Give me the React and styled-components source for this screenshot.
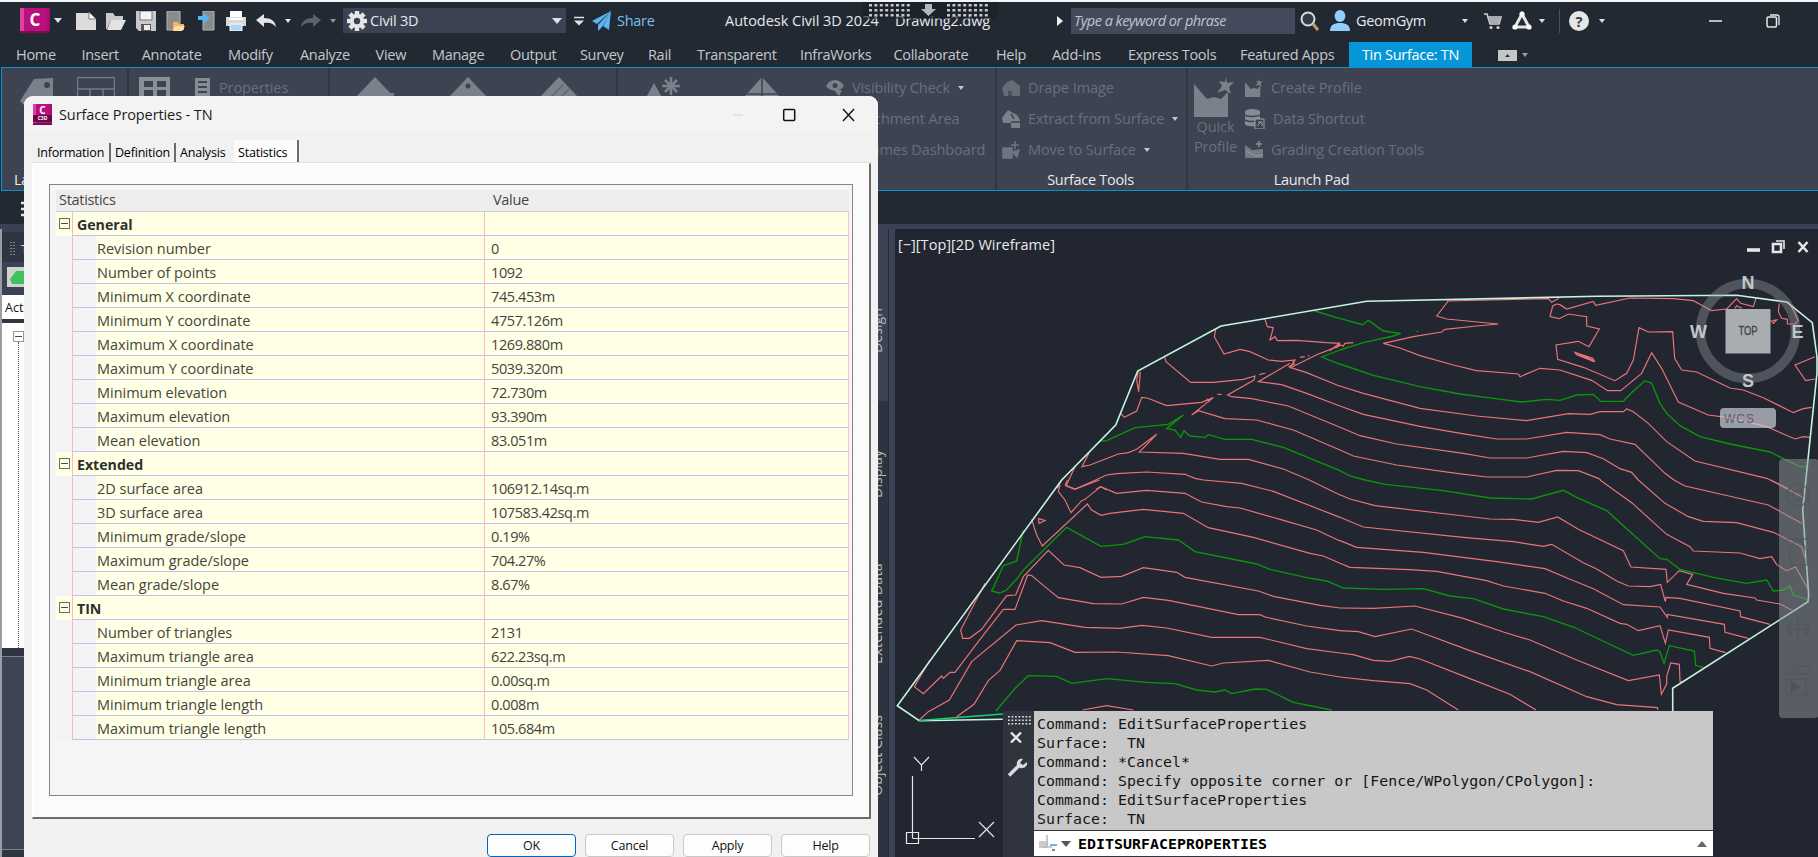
import React from 'react';
import styled, { createGlobalStyle, css } from 'styled-components';

const Global = createGlobalStyle`
  *, *::before, *::after { box-sizing: border-box; }
  html, body { margin: 0; padding: 0; background: #222933; }
  body { font-family: "Open Sans", "Noto Sans", sans-serif; overflow: hidden; }
`;

/* ---------- application shell ---------- */
const Shell = styled.div`
  position: relative;
  width: 1818px;
  height: 857px;
  overflow: hidden;
  display: flex;
  flex-direction: column;
  background: #222933;
  border-top: 2px solid #f4f6f8;
`;
const TitleBar = styled.header`
  height: 37px;
  flex: none;
  display: flex;
  align-items: center;
  color: #f0f2f4;
`;
const Cell = styled.div`
  width: ${p => p.$w}px;
  height: ${p => p.$h || 26}px;
  flex: none;
  display: flex;
  align-items: center;
  white-space: nowrap;
  ${p => p.$center && css`justify-content: center;`}
`;
const Label = styled.span`
  font-size: ${p => p.$size || 14.5}px;
  letter-spacing: ${p => p.$ls ?? -0.3}px;
  color: ${p => p.$color || '#e6e9ec'};
  font-style: ${p => (p.$italic ? 'italic' : 'normal')};
  white-space: nowrap;
  line-height: 18px;
`;
const Caret = styled.i`
  display: block;
  width: 0;
  height: 0;
  border: ${p => p.$s || 4}px solid transparent;
  border-top: ${p => (p.$s || 4) + 1}px solid ${p => p.$color || '#dfe2e5'};
  border-bottom: 0;
`;
const Workspace = styled.div`
  width: 223px;
  height: 25px;
  flex: none;
  display: flex;
  align-items: center;
  gap: 3px;
  padding: 0 4px;
  background: #3b4352;
  ${Caret} { margin-left: auto; }
`;
const SearchBox = styled.div`
  width: 224px;
  height: 26px;
  flex: none;
  display: flex;
  align-items: center;
  padding-left: 3px;
  background: #444a5b;
`;
const Divider = styled.div`
  width: 1px;
  height: 24px;
  background: #4a505c;
`;
const AppBadge = styled.div`
  width: ${p => p.$w}px;
  height: ${p => p.$h}px;
  flex: none;
  display: flex;
  flex-direction: column;
  align-items: center;
  justify-content: center;
  background: linear-gradient(90deg, #e0409e 0 14%, #b8107c 14% 85%, #a00c6c);
  border-bottom: 2px solid #7d0a52;
  color: #fff;
  font: bold ${p => p.$fs}px/1 "Open Sans", sans-serif;
  small {
    align-self: stretch;
    background: #6d0648;
    font-size: 5px;
    line-height: 7px;
    text-align: center;
  }
`;

/* ---------- ribbon ---------- */
const TabRow = styled.nav`
  height: 28px;
  flex: none;
  display: flex;
  align-items: stretch;
  padding-left: 16px;
`;
const RibbonTab = styled.div`
  width: ${p => p.$w}px;
  flex: none;
  display: flex;
  align-items: center;
  padding-top: 2px;
  font-size: 14.5px;
  letter-spacing: -0.3px;
  white-space: nowrap;
  color: #c4c8cc;
`;
const ActiveTab = styled(RibbonTab)`
  justify-content: center;
  margin-top: 3px;
  padding: 0 0 1px;
  background: #0696d7;
  color: #fff;
`;
const Ribbon = styled.section`
  height: 124px;
  flex: none;
  display: flex;
  background: #3d4351;
  border: 1px solid #0a93d4;
  border-right: 0;
  margin-left: 1px;
`;
const Panel = styled.div`
  width: ${p => p.$w}px;
  flex: ${p => (p.$w ? 'none' : 1)};
  display: flex;
  flex-direction: column;
  padding-top: 4px;
  border-right: ${p => (p.$w ? '2px solid #303642' : '0')};
`;
const PanelBody = styled.div`
  height: 99px;
  display: flex;
  padding-left: ${p => p.$pl || 0}px;
`;
const PanelName = styled.div`
  display: flex;
  width: ${p => p.$w || 'auto'};
  justify-content: ${p => (p.$left ? 'flex-start' : 'center')};
  padding: 0 2px 0 ${p => (p.$left ? 12 : 0)}px;
  font-size: 14.5px;
  letter-spacing: -0.3px;
  line-height: 18px;
  color: #e8eaec;
`;
const ToolStack = styled.div`
  display: flex;
  flex-direction: column;
  margin-left: ${p => p.$ml || 0}px;
`;
const Tool = styled.div`
  height: 31px;
  display: flex;
  align-items: center;
  gap: 8px;
  font-size: 14.5px;
  letter-spacing: -0.1px;
  white-space: nowrap;
  color: #69707c;
`;
const BigTool = styled.div`
  width: ${p => p.$w}px;
  flex: none;
  display: flex;
  flex-direction: column;
  padding-top: 5px;
  font-size: 14.5px;
  letter-spacing: -0.1px;
  line-height: 20px;
  text-align: center;
  color: #69707c;
`;

/* ---------- workspace under the ribbon ---------- */
const FileTabs = styled.div`
  height: 33px;
  flex: none;
  padding: 10px 0 0 21px;
`;
const Work = styled.main`
  flex: 1;
  display: flex;
  min-height: 0;
  border-top: 5px solid #3b4154;
`;
const Toolspace = styled.aside`
  width: 889px;
  flex: none;
  display: flex;
  justify-content: space-between;
  background: #2f3541;
`;
const SpaceLeft = styled.div`
  width: 40px;
  display: flex;
  flex-direction: column;
  border-left: 2px solid #9a9da3;
`;
const SpaceHead = styled.div`
  height: 33px;
  padding: 3px 0 0 8px;
  display: flex;
  align-items: center;
  gap: 6px;
  border-top: 3px solid #3b4154;
  color: #dde0e4;
  font-size: 13px;
`;
const SpaceTool = styled.div`
  height: 33px;
  padding: 5px 5px;
  background: #3b4252;
`;
const GreenButton = styled.div`
  width: 26px;
  height: 20px;
  padding: 3px;
  background: #d4d2cf;
`;
const ViewSelect = styled.div`
  height: 24px;
  padding: 3px 3px;
  background: #fff;
  color: #111;
  font-size: 12.5px;
  line-height: 20px;
`;
const Tree = styled.div`
  height: 325px;
  margin-top: 4px;
  padding: 8px 0 0 11px;
  background: #fff;
`;
const TreeLine = styled.div`
  height: 306px;
  margin-left: 5px;
  border-left: 1px dotted #555;
`;
const Expander = styled.div`
  width: 11px;
  height: 11px;
  display: flex;
  align-items: center;
  justify-content: center;
  border: 1px solid ${p => p.$color || '#70705e'};
  &::after { content: ''; width: 7px; height: 1px; background: #4a4a55; }
`;
const LowerPane = styled.div`
  flex: 1;
  margin: 8px 0 7px;
  background: #3d4453;
  border-top: 1px solid #7d828c;
  border-bottom: 1px solid #7d828c;
`;
const SideTabs = styled.div`
  width: 21px;
  display: flex;
  flex-direction: column;
`;
const SideTab = styled.div`
  height: ${p => p.$h}px;
  padding: ${p => p.$pt}px 0 0 0;
  background: ${p => (p.$on ? '#3b4252' : '#2e3340')};
  border-right: 1px solid #272c37;
  color: #b9bdc3;
  font-size: 14.2px;
  line-height: 17px;
  letter-spacing: ${p => p.$ls || 0}px;
  white-space: nowrap;
  span { display: block; writing-mode: vertical-rl; transform: rotate(180deg); }
`;
const Splitter = styled.div`
  width: 6px;
  flex: none;
  background: #3a4253;
`;
const Viewport = styled.div`
  position: relative;
  flex: 1;
  background: #212630;
`;
const Drawing = styled.svg`
  display: block;
`;

/* ---------- overlays on the drawing ---------- */
const CommandWindow = styled.div`
  position: absolute;
  left: 1003px;
  top: 709px;
  width: 710px;
  height: 146px;
  display: flex;
  background: #30343f;
`;
const CommandGrip = styled.div`
  width: 31px;
  flex: none;
`;
const CommandBody = styled.div`
  flex: 1;
  display: flex;
  flex-direction: column;
  font-family: "DejaVu Sans Mono", "Liberation Mono", monospace;
  font-size: 14.9px;
  letter-spacing: 0.04px;
  color: #151515;
`;
const History = styled.div`
  height: 119px;
  padding: 4px 3px;
  background: #c8c8c8;
  line-height: 19px;
  white-space: pre;
`;
const Prompt = styled.div`
  height: 25px;
  margin-top: 1px;
  padding: 0 6px 0 5px;
  display: flex;
  align-items: center;
  gap: 4px;
  background: #fff;
  font-weight: bold;
  color: #000;
  b { flex: 1; margin-left: 3px; }
`;
const UpCaret = styled(Caret)`
  transform: rotate(180deg);
`;
const NavBar = styled.div`
  position: absolute;
  left: 1779px;
  top: 457px;
  width: 40px;
  height: 259px;
  border-radius: 4px;
  background: rgba(140, 146, 146, 0.52);
`;
const GripOverlay = styled.div`
  position: absolute;
  left: 862px;
  top: -2px;
  width: 136px;
  height: 19px;
  background: rgba(27, 31, 39, 0.6);
`;

/* ---------- dialog ---------- */
const Dialog = styled.div`
  position: absolute;
  left: 24px;
  top: 94px;
  width: 854px;
  height: 770px;
  border-radius: 9px 9px 0 0;
  display: flex;
  flex-direction: column;
  background: #f1f1f1;
  color: #111;
`;
const DialogTitle = styled.div`
  height: 37px;
  padding: 0 23px 0 9px;
  display: flex;
  align-items: center;
  gap: 7px;
  background: #f3f3f3;
  border-radius: 9px 9px 0 0;
`;
const Spacer = styled.div`flex: 1;`;
const DialogTabs = styled.div`
  height: 32px;
  margin: 0 8px 0 4px;
  padding-top: 7px;
  display: flex;
`;
const DialogTab = styled.div`
  width: ${p => p.$w}px;
  height: ${p => (p.$on ? 26 : 22)}px;
  margin-top: ${p => (p.$on ? 0 : 3)}px;
  padding: 0 0 ${p => (p.$on ? 2 : 4)}px ${p => p.$pl}px;
  display: flex;
  align-items: center;
  font-size: 12.5px;
  letter-spacing: -0.2px;
  color: #000;
  background: ${p => (p.$on ? '#fbfbfb' : 'transparent')};
  border-right: ${p => (p.$line ? '2px solid #6c6c6c' : '0')};
`;
const TabPage = styled.div`
  height: 656px;
  margin: -2px 7px 0 8px;
  padding: 20px 16px 0 16px;
  background: #fbfbfb;
  border-top: 1px solid #fff;
  border-left: 1px solid #fff;
  border-right: 2px solid #6c6c6c;
  border-bottom: 2px solid #6c6c6c;
  box-shadow: 0 -1px 0 #dedede;
`;
const GridFrame = styled.div`
  height: 612px;
  padding: 5px 3px 0 6px;
  background: #f5f5f5;
  border: 1px solid #858585;
`;
const GridHead = styled.div`
  height: 22px;
  display: grid;
  grid-template-columns: 428px 1fr;
  background: #ededed;
  border-bottom: 1px solid #cfcfcf;
  font-size: 14.5px;
  letter-spacing: -0.3px;
  line-height: 19px;
  color: #454545;
  div { padding-left: 3px; }
  div + div { padding-left: 9px; }
`;
const Row = styled.div`
  height: 24px;
  display: grid;
  grid-template-rows: 24px;
  grid-template-columns: 16px 412px 1fr;
  font-size: ${p => p.$group ? 14.2 : 14.5}px;
  font-weight: ${p => (p.$group ? 700 : 400)};
  letter-spacing: -0.02px;
  line-height: 25px;
  color: ${p => (p.$group ? '#2f2f2b' : '#454540')};
`;
const Gutter = styled.div`
  padding: 6px 0 0 3px;
  background: ${p => (p.$group ? '#ffffe6' : '#f3f3f3')};
`;
const NameCell = styled.div`
  padding-left: ${p => (p.$group ? 4 : 24)}px;
  border-left: 1px solid #f8bcbc;
  border-bottom: 1px solid #c4c0ee;
  background: ${p => (p.$group ? '#ffffe6' : 'linear-gradient(90deg, #f3f3f3 23px, #ffffe6 23px)')};
`;
const ValueCell = styled.div`
  padding-left: 6px;
  letter-spacing: -0.4px;
  border-left: 1px solid #f8bcbc;
  border-right: 1px solid #f0c4d4;
  border-bottom: 1px solid #c4c0ee;
  background: #ffffe6;
`;
const Buttons = styled.div`
  padding: 15px 8px 0 0;
  display: flex;
  justify-content: flex-end;
  gap: 9px;
`;
const PushButton = styled.div`
  width: 89px;
  height: 23px;
  padding-bottom: 1px;
  display: flex;
  align-items: center;
  justify-content: center;
  border: ${p => (p.$primary ? '1.5px solid #0067c0' : '1px solid #c8c8c8')};
  border-radius: 4px;
  background: #fdfdfd;
  font-size: 12.5px;
  letter-spacing: -0.2px;
`;

/* ---------- icons ---------- */
const Glyph = styled.svg`
  display: block;
  flex: none;
`;
const Svg = ({ w = 20, h = 20, vb, children }) => (
  <Glyph width={w} height={h} viewBox={vb || `0 0 ${w} ${h}`} fill="none">{children}</Glyph>
);
const NewIcon = () => <Svg><path d="M0 2h13l7 6v11H0z" fill="#dcdcdc" /><path d="M13 1v7h7z" fill="#fff" stroke="#777" /></Svg>;
const OpenIcon = () => <Svg><path d="M0 2h7l2 3h8v4H5L1 18H0z" fill="#c9c9c9" /><path d="M5 9h15l-5 10H1z" fill="#e2e2e2" /></Svg>;
const SaveIcon = () => <Svg><path d="M0 0h20v20H3l-3-3z" fill="#c9c9c9" /><path d="M4 0h12v9H4z" fill="#f4f4f4" stroke="#777" /><path d="M5 13h10v7H5z" fill="#555" /><path d="M8 14h6v5H8z" fill="#eee" /></Svg>;
const MobileOpenIcon = () => <Svg><path d="M1 0h13v19H1z" fill="#8b8b8b" stroke="#b5b5b5" /><path d="M7 11h5l1 2h5v6H7z" fill="#f2b764" /><path d="M9 15h10l-3 5H7z" fill="#ffdca0" /></Svg>;
const MobileSaveIcon = () => <Svg><path d="M5 0h11v19H5z" fill="#8b8b8b" stroke="#b5b5b5" /><path d="M0 5h6V2l6 5-6 5V9H0z" fill="#4db8f5" /></Svg>;
const PrintIcon = () => <Svg><path d="M4 0h12v6H4z" fill="#fff" /><path d="M0 6h20v9H0z" fill="#d8d8d8" /><path d="M3 8h14" stroke="#fff" strokeWidth="2" /><path d="M4 13h12v7H4z" fill="#a9d6f7" stroke="#fff" /></Svg>;
const ArrowIcon = ({ color, flip }) => (
  <Svg h={14} vb="0 0 20 14"><path transform={flip ? 'matrix(-1 0 0 1 20 0)' : ''} d="M0 6l8-6v4c7 0 11 3 12 9-3-4-7-5-12-4v4z" fill={color} /></Svg>
);
const GearIcon = () => <Svg w={20} h={20} vb="-10 -10 20 20">{[0, 45, 90, 135].map(a => <path key={a} d="M0-10V10" stroke="#e6e6e6" strokeWidth="4.4" transform={`rotate(${a})`} />)}<circle r="5.2" stroke="#e6e6e6" strokeWidth="4" fill="#3b4352" /></Svg>;
const PlaneIcon = () => <Svg><path d="M19 0L0 10l5 3zM19 0L6 14v6l4-4zM19 0l-8 15 6 4z" fill="#5bb5f0" /></Svg>;
const SearchIcon = () => <Svg><circle cx="8" cy="8" r="6.5" stroke="#d9dcdf" strokeWidth="2" fill="#333a45" /><path d="M13 13l5 6" stroke="#c39a68" strokeWidth="3" /></Svg>;
const UserIcon = () => <Svg h={21}><ellipse cx="10" cy="6" rx="5.4" ry="6" fill="#8fd0fb" /><path d="M0 21c0-6 4-8 10-8s10 2 10 8z" fill="#8fd0fb" /></Svg>;
const CartIcon = () => <Svg w={18} h={18}><path d="M0 2h3l3 10h9l2-7H4" stroke="#d0d3d6" strokeWidth="1.6" /><path d="M4 5h13l-2 6H6z" fill="#a9adb1" /><circle cx="7" cy="15.5" r="1.6" fill="#d0d3d6" /><circle cx="14" cy="15.5" r="1.6" fill="#d0d3d6" /></Svg>;
const AppsIcon = () => <Svg><path d="M10 3L3 16h14z" stroke="#e4e6e8" strokeWidth="3" /><circle cx="10" cy="3" r="2.6" fill="#fff" /><circle cx="3" cy="16" r="2.6" fill="#fff" /><circle cx="17" cy="16" r="2.6" fill="#fff" /></Svg>;
const HelpIcon = styled.div`
  width: 20px;
  height: 20px;
  border-radius: 50%;
  background: #e6e6e6;
  color: #3a3f48;
  font: bold 15px/20px "Open Sans", sans-serif;
  text-align: center;
`;
const DIM = '#7b818b';
const Peak = ({ w = 38, extra }) => <Svg w={w} h={26}><path d={`M${w / 2} 0L${w} 20v6H0v-6z`} fill={DIM} />{extra}</Svg>;
const HouseIcon = () => <Svg w={18} h={16}><path d="M0 8l5-6 5-2 8 6v10H2z" fill="#666c77" /><path d="M6 16v-5h4v5z" fill="#4a515d" /></Svg>;
const ExtractIcon = () => <Svg w={18} h={18}><path d="M0 8l6-8 5 3 4 2 3 5v8H9v-5H1z" fill="#7b818b" /><path d="M9 4l3 5M9 12h9" stroke="#3d4451" strokeWidth="1.5" /></Svg>;
const MoveIcon = () => <Svg w={18} h={18}><path d="M1 7h9v10H1zM13 0v8M9 4h8M10 11l7-2-2 7z" fill="#6e747f" stroke="#6e747f" strokeWidth="1.5" /></Svg>;
const ProfileIcon = ({ w = 18, h = 18 }) => <Svg w={w} h={h} vb="0 0 40 40"><path d="M0 7l13 15 7-2 7 2 7-7v25H0z" fill={DIM} /><path d="M32 0l1 6 7-1-5 5 2 7-6-4-8 3 5-7-3-5 6 1z" fill={DIM} /></Svg>;
const DataIcon = () => <Svg w={20} h={20}><path d="M0 3c0-4 15-4 15 0v12c0 3-15 3-15 0z" fill="#868b94" /><path d="M0 6c3 2 12 2 15 0M0 11c3 2 12 2 15 0" stroke="#3d4451" strokeWidth="1.5" /><path d="M10 10h9v10h-9z" fill="#3d4451" stroke="#9a9fa6" /><path d="M12 17l4-4M13 13h4v4" stroke="#9a9fa6" /></Svg>;
const GradingIcon = () => <Svg w={18} h={18}><path d="M0 4l7 5 11-1v9H0z" fill="#747a85" /><path d="M14 0v6M11 3h6M1 10l10 5 7-1" stroke="#8a9099" strokeWidth="1.5" /></Svg>;

/* ---------- data ---------- */
const TABS = [['Home', 65.5], ['Insert', 60.2], ['Annotate', 86.3], ['Modify', 72], ['Analyze', 75.6], ['View', 56.4], ['Manage', 78], ['Output', 70], ['Survey', 68], ['Rail', 49], ['Transparent', 103], ['InfraWorks', 93.5], ['Collaborate', 102.5], ['Help', 56], ['Add-ins', 76], ['Express Tools', 112], ['Featured Apps', 109]];

const STATS = [
  ['General', [['Revision number', '0'], ['Number of points', '1092'], ['Minimum X coordinate', '745.453m'], ['Minimum Y coordinate', '4757.126m'], ['Maximum X coordinate', '1269.880m'], ['Maximum Y coordinate', '5039.320m'], ['Minimum elevation', '72.730m'], ['Maximum elevation', '93.390m'], ['Mean elevation', '83.051m']]],
  ['Extended', [['2D surface area', '106912.14sq.m'], ['3D surface area', '107583.42sq.m'], ['Minimum grade/slope', '0.19%'], ['Maximum grade/slope', '704.27%'], ['Mean grade/slope', '8.67%']]],
  ['TIN', [['Number of triangles', '2131'], ['Maximum triangle area', '622.23sq.m'], ['Minimum triangle area', '0.00sq.m'], ['Minimum triangle length', '0.008m'], ['Maximum triangle length', '105.684m']]],
];

const HISTORY = ['Command: EditSurfaceProperties', 'Surface:  TN', 'Command: *Cancel*', 'Command: Specify opposite corner or [Fence/WPolygon/CPolygon]:', 'Command: EditSurfaceProperties', 'Surface:  TN'];

/* Contour lines of the surface, in four survey sheets drawn at 1:3. */
const SHEETS = [
  {
    x: 860, y: 230,
    minor: [
      '1215,267 1222,290 1240,293 1230,330 1245,320 1252,332 1310,331 1400,338 1440,340',
      '1067,298 1063,320 1092,372 1140,358 1170,365 1225,390 1265,394 1305,390 1290,412 1340,428 1440,469',
      '1298,390 1303,402 1285,410',
      '914,382 918,395 992,457 1060,457 1150,448 1185,438 1182,450 1103,495 1115,500 1175,506 1285,528 1440,592',
      '835,425 830,450 836,485 841,425',
      '780,548 793,562 830,543 845,502 862,504 920,527 1025,517 1060,503 1045,515 995,555 1015,542 1095,566 1190,570 1300,600 1440,660',
      '1040,506 1048,516',
      '1440,347 1370,374 1290,414', '1290,400 1195,455 1265,464 1340,490 1440,528',
      '1198,434 1216,429', '1072,493 1085,493', '1320,382 1334,380', '1344,378 1348,377',
      '690,663 666,710 690,705 775,672 805,668 830,658 890,613 838,666 970,670 1080,688 1165,688 1270,717 1348,750',
      '645,710 618,768 645,778 740,735 770,731 860,726 975,733 1005,745 1030,750',
      '605,750 592,775', '708,778 722,770 740,780',
    ],
    major: [
      '720,633 740,632 825,593 925,583 970,555 920,596 945,600 962,622 972,602 990,618 1035,622 1045,614 1095,628 1175,628 1270,652 1440,722',
      '1365,243 1440,266', '1440,360 1385,381 1440,403',
    ],
  },
  {
    x: 1330, y: 230,
    minor: [
      '355,213 320,258 350,267 505,282 440,288 345,298 335,306 250,320 160,340 210,354 270,377 370,405 440,422 565,432 570,440 630,415 690,420 785,451 833,482 872,482 935,430 965,368 995,415 1045,516 1135,555 1190,562 1310,590 1395,627 1420,620 1440,622',
      '350,213 655,206 665,217 687,205',
      '680,222 690,224 710,237 790,214 797,226 900,204 1030,206 1090,212 1145,242 1190,237 1220,206 1232,220 1270,230 1278,205',
      '680,222 668,228 660,260 688,266 715,252 770,260 770,288 808,297 777,350 745,334 678,345 683,388 760,412 855,452 890,430 910,390 927,293 955,306 1028,305 1034,385 1055,420 1100,426 1200,474 1240,480 1300,503 1390,548 1420,536 1445,532',
      '735,367 793,393 788,385 735,367 740,374 793,395',
      '30,468 100,490 270,535 440,558 590,572 715,551 780,553 810,545 880,545 890,537 910,545 955,580 1010,635 1095,693 1310,745 1375,776',
      '30,528 100,553 270,589 410,613 500,627 590,627 710,607 810,614 840,627 915,643 1005,730 1032,750',
      '30,592 90,617 200,642 400,670 480,684 590,684 700,664 770,668 820,686 870,716 905,727 925,750',
      '30,660 70,678 200,705 380,730 470,741 590,741 680,721 745,722 805,745 812,750',
      '30,338 0,362', '20,355 25,343 40,348 45,340 70,338',
      '1348,220 1345,245 1355,265 1372,268 1372,282 1395,282 1405,272 1390,240 1375,215',
      '1455,380 1395,405 1427,452 1455,447',
      '1322,270 1330,280 1340,270 1328,272',
      '1215,235 1220,227 1235,235',
    ],
    major: [
      '30,266 40,268 98,284 115,271 160,303 212,310 190,318 100,338 30,360',
      '260,303 266,306',
      '30,402 130,436 270,470 390,492 490,505 575,516 650,508 690,511 740,495 790,493 812,514 880,514 910,483 945,452 965,460 990,520 1010,550 1050,587 1110,620 1200,642 1320,666 1410,710 1430,710',
      '30,722 60,738 105,750',
    ],
  },
  {
    x: 860, y: 480,
    minor: [
      '622,0 616,15 645,27 718,0',
      '600,15 595,35 615,60 633,98 665,62 675,58 722,20 770,40 860,31 975,40 1025,66 1100,80 1140,84 1260,118 1370,150 1440,183',
      '515,118 530,165 547,198 682,72 695,90 723,106 750,100 850,88 970,100 1045,143 1180,172 1350,220 1390,228 1440,250',
      '535,115 555,122 537,130 535,115',
      '375,310 302,450 308,475 328,475 365,448 440,347 467,345 490,290 565,211 612,255 660,263 723,292 785,289 850,263 950,277 975,292 1195,333 1240,349 1380,376 1440,384',
      '210,540 163,620 190,641 245,588 250,595 270,577 285,577 360,478 430,388 465,388 503,285 515,287 540,308 595,353 700,371 785,372 850,352 925,361 1135,404 1200,404 1215,411 1340,438 1440,452',
      '178,720 205,695 268,660 335,545 468,435 545,422 675,442 780,445 845,436 920,444 1055,472 1200,472 1340,506 1440,519',
      '290,710 342,673 385,602 420,571 470,482 570,488 645,517 770,516 925,527 1055,558 1090,549 1225,541 1350,576 1440,591',
      '668,690 740,677 820,690', '1030,0 1145,10 1240,34 1440,112', '1348,0 1440,45',
    ],
    major: [
      '490,150 470,243 430,257 395,333 418,339 440,330 470,297 490,270 620,142 723,199 790,193 855,170 955,180 1005,215 1190,252 1230,268 1340,293 1400,303 1440,320',
      '408,693 465,625 505,587 590,589 635,610 740,596 860,607 945,611 1010,630 1065,636 1095,630 1115,641 1185,627 1220,628 1300,667 1415,690',
    ],
  },
  {
    x: 1330, y: 480,
    minor: [
      '30,44 60,57 135,77 480,117 550,118 625,127 683,111 745,148 880,212 903,261 1008,268 1012,307 1048,272 1088,283 1070,313 1180,340 1275,354 1280,360 1350,372 1385,390',
      '30,112 100,141 400,172 550,185 640,199 665,193 760,248 800,267 860,303 895,318 960,320 992,313 1006,365 1008,352 1050,355 1230,393 1232,410 1320,433',
      '30,182 80,202 280,217 500,245 645,266 720,298 790,326 880,374 990,381 1012,412 1012,403 1183,433 1185,457 1255,475',
      '30,250 60,262 240,269 320,274 470,302 520,318 645,340 700,363 770,385 870,430 890,433 925,452 990,437 1006,490 1015,450 1138,472 1140,505 1187,518',
      '30,384 130,385 255,378 400,415 520,456 600,480 740,540 895,602 988,585 994,643 1010,612 1010,590 1022,549 1048,553 1050,604 1058,606',
      '30,452 85,455 135,470 245,447 420,512 600,575 770,650 860,674 983,683 983,690',
      '30,519 70,524 130,541 180,544 238,529 270,537 420,596 540,643 618,690',
      '30,591 130,602 240,611 290,630 385,690',
      '810,0 905,68 1010,163 1080,200 1090,213 1230,219 1290,236 1325,230 1340,254 1370,272 1397,261 1433,325',
      '925,0 1005,70 1075,110 1120,124 1220,128 1330,157 1415,200 1425,235',
      '1032,0 1065,18 1315,75 1415,130', '1322,0 1418,52',
    ],
    major: [
      '105,0 165,13 340,32 480,54 605,57 700,31 740,52 830,92 990,236 1010,238 1050,268 1150,292 1250,310 1310,300 1330,333 1360,330 1380,318 1390,345 1430,358',
      '30,320 40,324 160,328 280,326 360,348 430,356 520,387 640,410 730,441 910,526 980,510 990,515 1002,550 1018,497 1093,513 1097,556 1120,562',
    ],
  },
];

const BOUNDARY = 'M1002.7 719.3L919.3 720.7L897.3 705.7L1061.7 480L1115.7 425L1137.7 371L1221 326L1263 319L1366.7 301.3L1596.7 296.3L1736.7 295.3L1786.7 302L1812.3 322.7L1817 357V373L1802.7 510L1808.7 595L1808 601.7L1672.7 688.3V711';

const Contours = () => SHEETS.map(s => (
  <g key={`${s.x}-${s.y}`} transform={`translate(${s.x} ${s.y}) scale(.33333)`} fill="none">
    {s.minor.map(p => <polyline key={p} points={p} stroke="#ea7478" strokeWidth="3.5" />)}
    {s.major.map(p => <polyline key={p} points={p} stroke="#0a970a" strokeWidth="4" />)}
  </g>
));

const ViewCube = () => (
  <g fontFamily="Liberation Sans, sans-serif" fontWeight="bold" textAnchor="middle">
    <circle cx="1748" cy="331" r="47.5" stroke="#9aa0a6" strokeOpacity=".38" strokeWidth="9.5" fill="none" />
    <rect x="1725.5" y="309" width="45" height="44.5" fill="#b4b8ba" fillOpacity=".93" />
    <g fontSize="18" fill="#c3c6c9">
      <text x="1748" y="288.500">N</text><text x="1748" y="387">S</text>
      <text x="1698.500" y="337.500">W</text><text x="1797.500" y="337.500">E</text>
    </g>
    <text x="1748" y="335" fontSize="12" fontWeight="normal" stroke="#3f444c" strokeWidth=".3" fill="#3f444c" textLength="19" lengthAdjust="spacingAndGlyphs">TOP</text>
    <rect x="1720" y="408" width="56" height="20" rx="4" fill="#c5cad6" fillOpacity=".72" />
    <text x="1739" y="422.5" fontSize="12" fontWeight="normal" fill="#596070" textLength="30">WCS</text>
    <path d="M1722 418l20-2 28 6" stroke="#ea7478" strokeOpacity=".35" fill="none" />
  </g>
);

const DocumentView = () => (
  <Viewport>
    <Drawing width="923" height="628" viewBox="895 229 923 628">
      <text x="898" y="250" fontSize="14.5" fill="#e8eaec" textLength="157">[−][Top][2D Wireframe]</text>
      <Contours />
      <path d={BOUNDARY} stroke="#c4f5e0" strokeWidth="1.6" fill="none" />
      <path d="M919 720.5L1003 714" stroke="#18d070" strokeWidth="1.6" />
      <ViewCube />
      <g stroke="#e4e6e8" fill="none">
        <path d="M1747 250h13" strokeWidth="3.6" />
        <path d="M1773 244h8v8h-8z" strokeWidth="2.6" /><path d="M1776 241h8v8" strokeWidth="1.6" />
        <path d="M1798.500 242l9 10M1807.500 242l-9 10" strokeWidth="2.6" />
        <path d="M912.500 776v62M912.500 838.500h62.500M906.500 832.500h12v11h-12z" strokeWidth="1.2" />
        <path d="M914 757l7.500 8 7.500-8M921.500 765v6M979 822l15 15M994 822l-15 15" strokeWidth="1.2" />
      </g>
    </Drawing>
  </Viewport>
);

const NavIcons = () => (
  <Svg w={39} h={259}>
    <g stroke="#4d5359" strokeWidth="2" strokeOpacity=".5">
      <circle cx="19" cy="36" r="11" /><circle cx="19" cy="36" r="5" />
      <path d="M8 80h22M10 92c6-14 12-14 18 0v14H12z" />
      <path d="M19 157v26M8 170h22M13 164l-5 6 5 6M26 164l5 6-5 6" />
      <path d="M7 207h10v8H7zM21 207h10v8H21zM7 220h20v16H7z" /><path d="M12 223v10l8-5z" fill="#4d5359" />
    </g>
  </Svg>
);

const Command = () => (
  <CommandWindow>
    <CommandGrip>
      <Svg w={31} h={70}>
        {[5, 8.500, 12].map(y => [5, 8.500, 12, 15.500, 19, 22.500, 26].map(x => <path key={`${x}-${y}`} d={`M${x} ${y}h1.800v1.600h-1.800z`} fill="#dadcdf" />))}
        <path d="M8 21.500l10 10M18 21.500l-10 10" stroke="#e4e6e8" strokeWidth="2.400" />
        <path d="M6 64.500l11-11" stroke="#dadcdf" strokeWidth="3.600" />
        <path d="M14 55c-1-5 2-8 6-7l-3 4 3 2 4-3c1 4-3 7-7 6z" fill="#dadcdf" />
      </Svg>
    </CommandGrip>
    <CommandBody>
      <History>{HISTORY.join('\n')}</History>
      <Prompt>
        <Svg w={18} h={18}><path d="M0 6h9v7H0z" fill="#ccc" /><path d="M8 0v12M4 12h9" stroke="#bbb" strokeWidth="1.500" /><path d="M11 10h7" stroke="#64b8f0" strokeWidth="2" /><path d="M13 15h3" stroke="#556" strokeWidth="1.500" /></Svg>
        <Caret $s={5} $color="#555" />
        <b>EDITSURFACEPROPERTIES</b>
        <UpCaret $s={5} $color="#666" />
      </Prompt>
    </CommandBody>
  </CommandWindow>
);

const SurfaceDialog = () => (
  <Dialog>
    <DialogTitle>
      <AppBadge $w={19} $h={21} $fs={10}>C<small>C3D</small></AppBadge>
      <Label $color="#1b1b1b" $size={14.500} $ls={-0.1}>Surface Properties - TN</Label>
      <Spacer />
      <Svg w={125} h={14}>
        <path d="M3 7h10" stroke="#cfcfcf" />
        <rect x="53.700" y="1.500" width="11" height="11" rx="1" stroke="#111" strokeWidth="1.500" />
        <path d="M113 1l11 12M124 1l-11 12" stroke="#111" strokeWidth="1.400" />
      </Svg>
    </DialogTitle>
    <DialogTabs>
      <DialogTab $w={83} $pl={9} $line>Information</DialogTab>
      <DialogTab $w={65} $pl={4} $line>Definition</DialogTab>
      <DialogTab $w={58} $pl={4}>Analysis</DialogTab>
      <DialogTab $w={65} $pl={4} $line $on>Statistics</DialogTab>
    </DialogTabs>
    <TabPage>
      <GridFrame>
        <GridHead><div>Statistics</div><div>Value</div></GridHead>
        {STATS.map(([group, rows]) => (
          <React.Fragment key={group}>
            <Row $group><Gutter $group><Expander /></Gutter><NameCell $group>{group}</NameCell><ValueCell /></Row>
            {rows.map(([name, value]) => (
              <Row key={name}><Gutter /><NameCell>{name}</NameCell><ValueCell>{value}</ValueCell></Row>
            ))}
          </React.Fragment>
        ))}
      </GridFrame>
    </TabPage>
    <Buttons>
      <PushButton $primary>OK</PushButton>
      <PushButton>Cancel</PushButton>
      <PushButton>Apply</PushButton>
      <PushButton>Help</PushButton>
    </Buttons>
  </Dialog>
);

const Title = () => (
  <TitleBar>
    <Cell $w={20} />
    <Cell $w={34}><AppBadge $w={30} $h={25} $fs={17}>C</AppBadge></Cell>
    <Cell $w={22}><Caret /></Cell>
    <Cell $w={30}><NewIcon /></Cell>
    <Cell $w={30}><OpenIcon /></Cell>
    <Cell $w={30}><SaveIcon /></Cell>
    <Cell $w={32}><MobileOpenIcon /></Cell>
    <Cell $w={28}><MobileSaveIcon /></Cell>
    <Cell $w={30}><PrintIcon /></Cell>
    <Cell $w={29}><ArrowIcon color="#e3e5e8" /></Cell>
    <Cell $w={16}><Caret $s={3} /></Cell>
    <Cell $w={29}><ArrowIcon color="#5c626d" flip /></Cell>
    <Cell $w={13}><Caret $s={3} $color="#8a8f98" /></Cell>
    <Workspace><GearIcon /><Label $ls={-0.2}>Civil 3D</Label><Caret $s={5} /></Workspace>
    <Cell $w={26} $center><Svg w={12} h={10}><path d="M1 1.500h10" stroke="#dfe2e5" strokeWidth="1.500" /><path d="M1 4.500h10l-5 5z" fill="#dfe2e5" /></Svg></Cell>
    <Cell $w={25}><PlaneIcon /></Cell>
    <Cell $w={108}><Label $color="#79bff2">Share</Label></Cell>
    <Cell $w={170}><Label $ls={-0.02}>Autodesk Civil 3D 2024</Label></Cell>
    <Cell $w={162}><Label $ls={-0.1}>Drawing2.dwg</Label></Cell>
    <Cell $w={14}><Svg w={6} h={10}><path d="M0 0l6 5-6 5z" fill="#eee" /></Svg></Cell>
    <SearchBox><Label $italic $color="#c0c4cc" $ls={-0.52}>Type a keyword or phrase</Label></SearchBox>
    <Cell $w={5} />
    <Cell $w={30}><SearchIcon /></Cell>
    <Cell $w={26}><UserIcon /></Cell>
    <Cell $w={106}><Label>GeomGym</Label></Cell>
    <Cell $w={22}><Caret $s={3} /></Cell>
    <Cell $w={28}><CartIcon /></Cell>
    <Cell $w={27}><AppsIcon /></Cell>
    <Cell $w={20}><Caret $s={3} /></Cell>
    <Cell $w={10}><Divider /></Cell>
    <Cell $w={30}><HelpIcon>?</HelpIcon></Cell>
    <Cell $w={110}><Caret $s={3} /></Cell>
    <Cell $w={57}><Svg w={13} h={4}><path d="M0 2h13" stroke="#e8eaec" strokeWidth="1.500" /></Svg></Cell>
    <Cell $w={20}><Svg w={14} h={14}><rect x="1" y="3" width="9.500" height="10" rx="1.500" stroke="#e8eaec" strokeWidth="1.500" /><path d="M4 1h7c1.500 0 2 .5 2 2v8" stroke="#e8eaec" strokeWidth="1.300" /></Svg></Cell>
  </TitleBar>
);

const RibbonBar = () => (
  <Ribbon>
    <Panel $w={127}>
      <PanelBody $pl={18}>
        <BigTool $w={57}><Svg w={34} h={70}><path d="M14 2L33 1v20L18 42 0 24z" fill={DIM} /><circle cx="27" cy="8" r="3" fill="#3d4451" /></Svg></BigTool>
        <BigTool $w={40}><Svg w={38} h={40}><path d="M.5.5h37v38H.5zM.5 12h37M.5 20h37M13 12v27M26 12v27" stroke="#747a85" strokeWidth="1.500" /></Svg></BigTool>
      </PanelBody>
      <PanelName $left>Labels &amp; Tables</PanelName>
    </Panel>
    <Panel $w={201}>
      <PanelBody $pl={10}>
        <BigTool $w={56}><Svg w={34} h={38} vb="0 4 34 34"><path d="M0 0h31v36H0z" fill="#8a8f98" /><path d="M5 6h9v6H5zM18 6h9v6h-9zM5 15h9v6H5zM18 15h9v6h-9z" fill="#3d4451" /></Svg></BigTool>
        <Tool><Svg w={16} h={20}><path d="M0 0h15v20H0z" fill="#868b94" /><path d="M3 4h9M3 9h9M3 14h9" stroke="#3d4451" strokeWidth="2" /></Svg>Properties</Tool>
      </PanelBody>
    </Panel>
    <Panel $w={288}>
      <PanelBody $pl={26}>
        <BigTool $w={93}><Peak extra={<path d="M32 16h9v4h-9z" fill={DIM} />} /></BigTool>
        <BigTool $w={91}><Peak extra={<circle cx="19" cy="9" r="2.500" fill="#3d4451" />} /></BigTool>
        <BigTool $w={60}><Peak extra={<path d="M11 20l12-12M17 24l12-12" stroke="#5f6570" strokeWidth="1.500" />} /></BigTool>
      </PanelBody>
    </Panel>
    <Panel $w={379}>
      <PanelBody $pl={28}>
        <BigTool $w={98}><Svg w={36} h={26}><path d="M8 6l11 20H-3z" fill={DIM} /><path d="M25 0v18M16 9h18M19 3l12 12M31 3L19 15" stroke={DIM} strokeWidth="2.500" /></Svg></BigTool>
        <BigTool $w={82}><Peak w={36} extra={<path d="M18 0v26M0 17h36" stroke="#3d4451" strokeWidth="1.500" />} /></BigTool>
        <ToolStack>
          <Tool><Svg w={18} h={16}><path d="M0 6c4-8 14-8 18 0-4 6-14 6-18 0zM8 10h8l-3 6z" fill={DIM} /><circle cx="9" cy="5.500" r="2.500" fill="#3d4451" /></Svg>Visibility Check<Caret $s={3} $color="#c4c8cc" /></Tool>
          <Tool><Svg w={18} h={16}><path d="M0 14L9 2l9 12z" fill={DIM} /></Svg>Catchment Area</Tool>
          <Tool><Svg w={16} h={16}><path d="M0 4h16v10H0z" fill={DIM} /></Svg>Volumes Dashboard</Tool>
        </ToolStack>
      </PanelBody>
    </Panel>
    <Panel $w={191}>
      <PanelBody $pl={5}>
        <ToolStack>
          <Tool><HouseIcon />Drape Image</Tool>
          <Tool><ExtractIcon />Extract from Surface<Caret $s={3} $color="#c4c8cc" /></Tool>
          <Tool><MoveIcon />Move to Surface<Caret $s={3} $color="#c4c8cc" /></Tool>
        </ToolStack>
      </PanelBody>
      <PanelName>Surface Tools</PanelName>
    </Panel>
    <Panel>
      <PanelBody $pl={5}>
        <BigTool $w={45}><ProfileIcon w={42} h={40} /><span>Quick</span><span>Profile</span></BigTool>
        <ToolStack $ml={7}>
          <Tool><ProfileIcon />Create Profile</Tool>
          <Tool><DataIcon />Data Shortcut</Tool>
          <Tool><GradingIcon />Grading Creation Tools</Tool>
        </ToolStack>
      </PanelBody>
      <PanelName $w="249px">Launch Pad</PanelName>
    </Panel>
  </Ribbon>
);

export default function App() {
  return (
    <>
      <Global />
      <Shell>
        <Title />
        <TabRow>
          {TABS.map(([name, w]) => <RibbonTab key={name} $w={w}>{name}</RibbonTab>)}
          <ActiveTab $w={123}>Tin Surface: TN</ActiveTab>
          <Cell $w={26} />
          <Cell $w={24} $h={32}><Svg w={19} h={11}><path d="M0 0h19v11H0z" fill="#c4c6c8" /><path d="M7 7h5L9.500 4z" fill="#333" /></Svg></Cell>
          <Cell $w={10} $h={32}><Caret $s={3} $color="#9a9fa6" /></Cell>
        </TabRow>
        <RibbonBar />
        <FileTabs><Svg w={14} h={16}><path d="M0 2h14M0 8h14M0 14h14" stroke="#e4e6e8" strokeWidth="2.500" /></Svg></FileTabs>
        <Work>
          <Toolspace>
            <SpaceLeft>
              <SpaceHead><Svg w={5} h={13}><path d="M1 0v13M4 0v13" stroke="#cfd2d6" strokeDasharray="1 2" /></Svg>T</SpaceHead>
              <SpaceTool><GreenButton><Svg w={20} h={15}><path d="M0 9l6-8h10l3 4-4 9H2z" fill="#3ec35c" /></Svg></GreenButton></SpaceTool>
              <ViewSelect>Active</ViewSelect>
              <Tree><Expander $color="#999" /><TreeLine /></Tree>
              <LowerPane />
            </SpaceLeft>
            <SideTabs>
              <SideTab $h={172} $pt={79} $on><span>Design</span></SideTab>
              <SideTab $h={143} $pt={49}><span>Display</span></SideTab>
              <SideTab $h={151} $pt={19} $ls={0.300}><span>Extended Data</span></SideTab>
              <SideTab $h={162} $pt={20}><span>Object Class</span></SideTab>
            </SideTabs>
          </Toolspace>
          <Splitter />
          <DocumentView />
        </Work>
        <NavBar><NavIcons /></NavBar>
        <Command />
        <GripOverlay>
          <Svg w={136} h={19}>
            {[0, 78].map(o => [4, 9, 14].map(y => [0, 1, 2, 3, 4, 5, 6, 7].map(i => <path key={`${o}-${y}-${i}`} d={`M${7 + o + i * 5.400} ${y}h3v2.500h-3z`} fill="#c3c6ca" />)))}
            <path d="M63 4h7v5h4l-7.500 7L59 9h4z" fill="#b4b7bb" />
          </Svg>
        </GripOverlay>
        <SurfaceDialog />
      </Shell>
    </>
  );
}
